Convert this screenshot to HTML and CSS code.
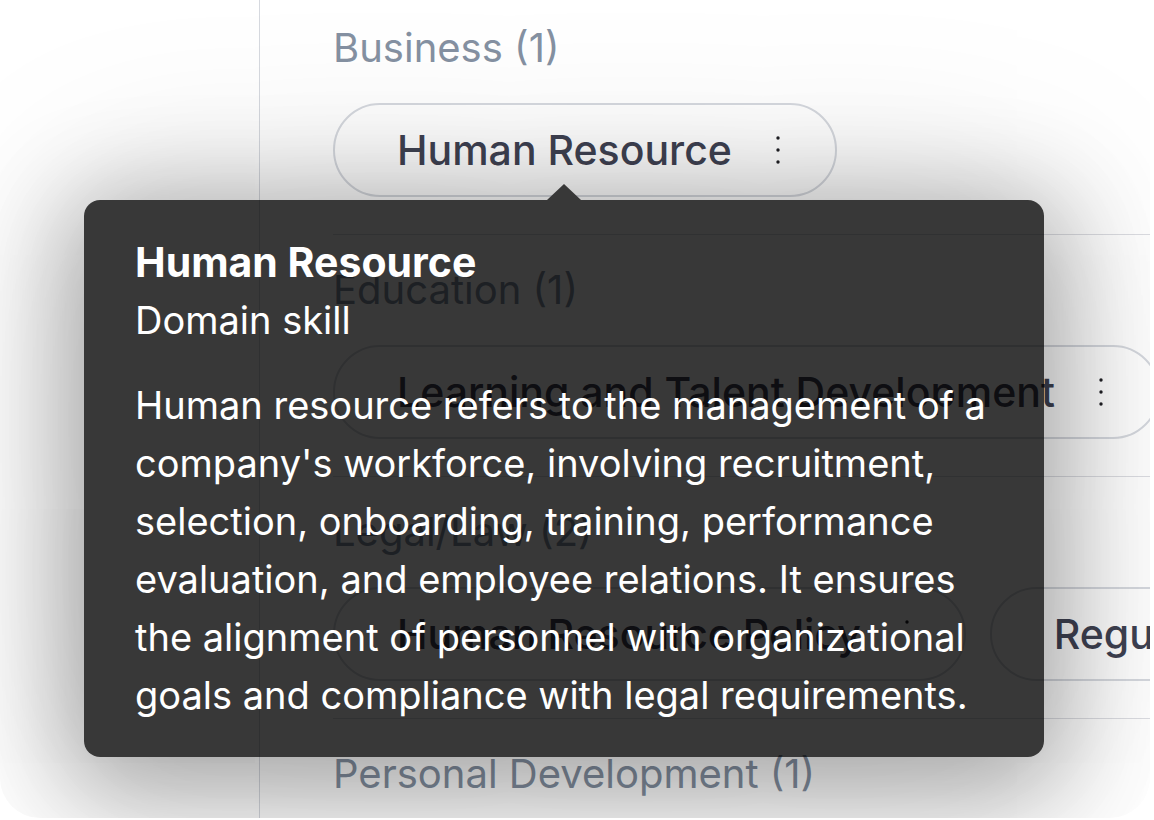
FILE: index.html
```html
<!DOCTYPE html>
<html lang="en">
<head>
<meta charset="utf-8">
<title>Skills</title>
<link rel="stylesheet" href="styles.css">
</head>
<body>
<div class="card">
  <aside class="sidebar"></aside>
  <main class="main">
    <section class="group group-first">
      <h3 class="group-title">Business (1)</h3>
      <div class="chips">
        <div class="chip"><span class="chip-label">Human Resource</span><svg class="dots" width="6" height="30" viewBox="0 0 6 30"><circle cx="3" cy="3" r="1.7"/><circle cx="3" cy="15" r="1.7"/><circle cx="3" cy="27" r="1.7"/></svg></div>
      </div>
    </section>
    <section class="group">
      <h3 class="group-title">Education (1)</h3>
      <div class="chips">
        <div class="chip"><span class="chip-label">Learning and Talent Development</span><svg class="dots" width="6" height="30" viewBox="0 0 6 30"><circle cx="3" cy="3" r="1.7"/><circle cx="3" cy="15" r="1.7"/><circle cx="3" cy="27" r="1.7"/></svg></div>
      </div>
    </section>
    <section class="group">
      <h3 class="group-title">Legal/Law (2)</h3>
      <div class="chips">
        <div class="chip"><span class="chip-label">Human Resource Policy</span><svg class="dots" width="6" height="30" viewBox="0 0 6 30"><circle cx="3" cy="3" r="1.7"/><circle cx="3" cy="15" r="1.7"/><circle cx="3" cy="27" r="1.7"/></svg></div>
        <div class="chip"><span class="chip-label">Regulatory Compliance</span><svg class="dots" width="6" height="30" viewBox="0 0 6 30"><circle cx="3" cy="3" r="1.7"/><circle cx="3" cy="15" r="1.7"/><circle cx="3" cy="27" r="1.7"/></svg></div>
      </div>
    </section>
    <section class="group">
      <h3 class="group-title">Personal Development (1)</h3>
    </section>
  </main>
  <div class="tooltip" role="tooltip">
    <div class="tooltip-title">Human Resource</div>
    <div class="tooltip-sub">Domain skill</div>
    <p class="tooltip-body">Human resource refers to the management of a company's workforce, involving recruitment, selection, onboarding, training, performance evaluation, and employee relations. It ensures the alignment of personnel with organizational goals and compliance with legal requirements.</p>
  </div>
</div>
</body>
</html>
```

FILE: styles.css
```css
* { box-sizing: border-box; }

html, body {
  margin: 0;
  padding: 0;
  background: #ffffff;
}

body {
  font-family: Inter, "DejaVu Sans", sans-serif;
  width: 1154px;
  height: 820px;
  overflow: hidden;
}

.card {
  position: relative;
  width: 1150px;
  height: 818px;
  background: #ffffff;
  border-bottom-left-radius: 40px;
  border-bottom-right-radius: 40px;
  overflow: hidden;
  display: grid;
  grid-template-columns: 260px 1fr;
}

.sidebar {
  border-right: 1px solid #d6d9df;
}

.main {
  display: flex;
  flex-direction: column;
  min-width: 0;
}

.group {
  margin-left: 73px;
  padding: 33px 0 37px;
  border-bottom: 1px solid #dcdde2;
}

.group-first {
  padding-top: 26px;
}

.group-title {
  margin: 0;
  font-size: 40px;
  line-height: 44px;
  font-weight: 400;
  color: #8591a2;
  white-space: nowrap;
}

.chips {
  display: flex;
  gap: 24px;
  margin-top: 33px;
}

.chip {
  flex-shrink: 0;
  display: flex;
  align-items: center;
  gap: 43px;
  height: 94px;
  padding: 0 54px 0 62px;
  border: 2px solid #d6d9df;
  border-radius: 47px;
  white-space: nowrap;
}

.chip-label {
  font-size: 41px;
  font-weight: 500;
  color: #3f4252;
}

.dots {
  fill: #1f1f24;
  flex-shrink: 0;
}

.tooltip {
  position: absolute;
  left: 84px;
  top: 200px;
  width: 960px;
  padding: 33px 51px;
  background: rgba(0, 0, 0, 0.78);
  border-radius: 16px;
  color: #ffffff;
  font-size: 38px;
  line-height: 58px;
  box-shadow: 0 20px 100px 20px rgba(0, 0, 0, 0.3), 0 0 200px 0 rgba(0, 0, 0, 0.15);
}

.tooltip::before {
  content: "";
  position: absolute;
  left: 463px;
  top: -16px;
  border-left: 17px solid transparent;
  border-right: 17px solid transparent;
  border-bottom: 16px solid #383838;
}

.tooltip-title {
  font-size: 41px;
  font-weight: 700;
}

.tooltip-sub {
  font-weight: 400;
}

.tooltip-body {
  margin: 27px 0 0;
}
```
